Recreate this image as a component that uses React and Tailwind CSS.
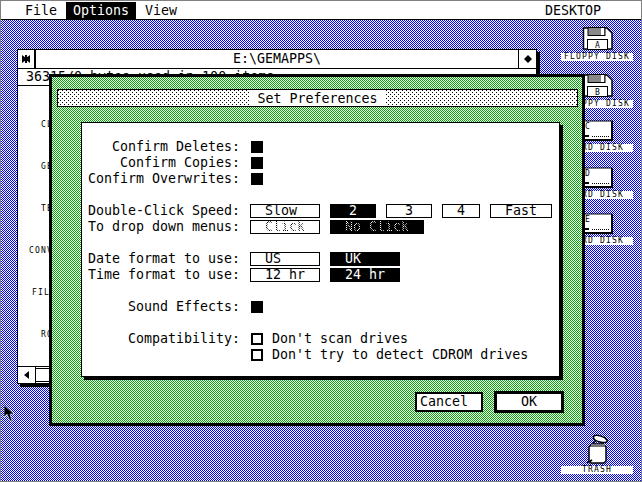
const blue = "bg-[repeating-conic-gradient(#0000ff_0_25%,#ffffff_0_50%)] bg-[length:2px_2px]";
const green = "bg-[repeating-conic-gradient(#00aa00_0_25%,#ffffff_0_50%)] bg-[length:2px_2px]";
const dots = "bg-white bg-[conic-gradient(at_1px_1px,transparent_75%,#000000_0),conic-gradient(at_1px_1px,transparent_75%,#000000_0)] bg-[length:4px_4px] bg-[position:0_0,2px_2px]";
const mono = "font-['DejaVu_Sans_Mono',monospace] text-[13.3px] leading-4";

function Floppy({ letter }) {
  return (
    <svg width="31" height="23" viewBox="0 0 31 23" className="block">
      <path d="M1.5 1H25L30 6V22H1.5Z" fill="#fff" stroke="#000" strokeWidth="1.5" />
      <rect x="6" y="0.5" width="17" height="8" fill="#888" stroke="#000" />
      <rect x="19" y="1" width="3" height="7" fill="#fff" />
      <rect x="5.5" y="12.5" width="20" height="10" fill="#fff" stroke="#000" />
      <text x="15.5" y="20.5" fontSize="8" textAnchor="middle" fontFamily="DejaVu Sans Mono" fill="#000">{letter}</text>
    </svg>
  );
}

function HardDisk({ letter }) {
  return (
    <svg width="31" height="21" viewBox="0 0 31 21" className="block">
      <rect x="1" y="1" width="29" height="19" fill="#fff" stroke="#000" />
      <rect x="29" y="1" width="2" height="20" fill="#000" />
      <rect x="1" y="19" width="30" height="2" fill="#000" />
      <text x="3" y="9" fontSize="8" fontFamily="DejaVu Sans Mono" fill="#000">{letter}</text>
      <rect x="3" y="15" width="4" height="2" fill="#000" />
      <path d="M10 16.5H28" stroke="#000" strokeDasharray="1 1" />
    </svg>
  );
}

function DeskIcon({ className, label, children }) {
  return (
    <div className={`absolute w-[72px] flex flex-col items-center ${className}`}>
      {children}
      <div className="w-full h-2 mt-[3px] bg-white text-center text-black font-['DejaVu_Sans_Mono',monospace] text-[8px] leading-2 tracking-[1.2px]">
        {label}
      </div>
    </div>
  );
}

function Option({ on, width, pad, disabled, children }) {
  let text = "";
  if (disabled) {
    text = on
      ? "bg-[repeating-conic-gradient(#ffffff_0_25%,#000000_0_50%)] bg-[length:2px_2px] bg-clip-text text-transparent"
      : "bg-[repeating-conic-gradient(#000000_0_25%,#ffffff_0_50%)] bg-[length:2px_2px] bg-clip-text text-transparent";
  }
  return (
    <div className={`h-[14px] border border-black flex items-center ${on ? "bg-black text-white" : "bg-white text-black"} ${width} ${pad}`}>
      <span className={`whitespace-pre leading-3 ${text}`}>{children}</span>
    </div>
  );
}

function Row({ label, children, className = "" }) {
  return (
    <div className={`h-4 flex items-center ${className}`}>
      <div className="w-[158px] text-right whitespace-pre">{label}</div>
      <div className="ml-[10px] flex items-center gap-[10px]">{children}</div>
    </div>
  );
}

function Box({ on }) {
  return <div className={`ml-px size-3 border-2 border-black ${on ? "bg-black" : "bg-white"}`} />;
}

function Check({ children }) {
  return (
    <div className="flex items-center gap-[9px]">
      <Box />
      <span className="whitespace-pre">{children}</span>
    </div>
  );
}

function DirWindow() {
  const items = [
    ["CLOCK", "ml-[23px]"],
    ["GEMAPPS", "ml-[23px]"],
    ["TEXT", "ml-[23px]"],
    ["CONVERT", "ml-[11px]"],
    ["FILES", "ml-[14px]"],
    ["ROOT", "ml-[23px]"],
  ];
  return (
    <div className="absolute left-4 top-[29px] w-[520px] h-[335px] border border-black bg-white shadow-[3px_3px_0_#000] flex flex-col text-black">
      <div className="h-[19px] flex border-b border-black">
        <div className="w-[18px] border-r-2 border-black flex items-center justify-center">
          <svg width="8" height="8" viewBox="0 0 8 8"><path d="M0 0L4 3L8 0V8L4 5L0 8Z" fill="#000" /><rect x="3" y="0" width="2" height="8" fill="#000" /></svg>
        </div>
        <div className={`flex-1 text-center ${mono} leading-[18px]`}>E:\GEMAPPS\</div>
        <div className="w-[18px] border-l border-black flex items-center justify-center">
          <svg width="8" height="8" viewBox="0 0 8 8"><path d="M4 0L8 4L4 8L0 4Z" fill="#000" /></svg>
        </div>
      </div>
      <div className={`h-[17px] pl-2 border-b border-black whitespace-pre ${mono}`}>36315/0 bytes used in 100 items</div>
      <div className="flex-1 flex flex-col pt-[35px] gap-[34px] overflow-hidden">
        {items.map(([name, ml]) => (
          <div key={name} className={`h-2 whitespace-pre font-['DejaVu_Sans_Mono',monospace] text-[8px] leading-2 tracking-[1.2px] ${ml}`}>{name}</div>
        ))}
      </div>
      <div className="h-[17px] flex border-t border-black">
        <div className="w-[18px] border-r border-black flex items-center justify-center">
          <svg width="5" height="8" viewBox="0 0 5 8"><path d="M5 0V8L0 4Z" fill="#000" /></svg>
        </div>
        <div className="flex-1 my-[1px] border-y border-black" />
      </div>
    </div>
  );
}

function PrefsDialog() {
  return (
    <div className={`absolute left-[48px] top-[54px] w-[536px] h-[352px] border-[3px] border-black flex flex-col text-black ${green} ${mono}`}>
      <div className={`mt-3 ml-[5px] w-[521px] h-[18px] border border-black flex justify-center ${dots}`}>
        <div className="bg-white px-2 leading-[17px]">Set Preferences</div>
      </div>
      <div className="mt-[15px] ml-[29px] w-[479px] h-[255px] border border-black bg-white shadow-[3px_3px_0_#000] pt-4 flex flex-col">
        <Row label="Confirm Deletes:"><Box on /></Row>
        <Row label="Confirm Copies:"><Box on /></Row>
        <Row label="Confirm Overwrites:"><Box on /></Row>
        <Row label="Double-Click Speed:" className="mt-4">
          <Option width="w-[70px]" pad="pl-[14px]">Slow</Option>
          <Option on width="w-[46px]" pad="pl-[18px]">2</Option>
          <Option width="w-[46px]" pad="pl-[18px]">3</Option>
          <Option width="w-[38px]" pad="pl-[14px]">4</Option>
          <Option width="w-[62px]" pad="pl-[14px]">Fast</Option>
        </Row>
        <Row label="To drop down menus:">
          <Option disabled width="w-[70px]" pad="pl-[14px]">Click</Option>
          <Option disabled on width="w-[94px]" pad="pl-[14px]">No Click</Option>
        </Row>
        <Row label="Date format to use:" className="mt-4">
          <Option width="w-[70px]" pad="pl-[14px]">US</Option>
          <Option on width="w-[70px]" pad="pl-[14px]">UK</Option>
        </Row>
        <Row label="Time format to use:">
          <Option width="w-[70px]" pad="pl-[14px]">12 hr</Option>
          <Option on width="w-[70px]" pad="pl-[14px]">24 hr</Option>
        </Row>
        <Row label="Sound Effects:" className="mt-4"><Box on /></Row>
        <Row label="Compatibility:" className="mt-4"><Check>Don't scan drives</Check></Row>
        <Row label=""><Check>Don't try to detect CDROM drives</Check></Row>
      </div>
      <div className="mt-[14px] ml-[363px] flex items-center gap-[11px]">
        <div className="w-[68px] h-5 border-2 border-black bg-white pl-[3px] leading-4">Cancel</div>
        <div className="w-[70px] h-[22px] border-[3px] border-black bg-white text-center leading-4">OK</div>
      </div>
    </div>
  );
}

export default function App() {
  return (
    <div className="w-[642px] h-[482px] box-border border border-[#808080] overflow-hidden flex flex-col bg-white">
      <div className={`h-[19px] border-b border-black flex items-stretch text-black ${mono}`}>
        <div className="ml-[24px] w-[41px] pt-[2px]">File</div>
        <div className="w-[70px] pl-[7px] pt-px bg-black text-white mt-px">Options</div>
        <div className="ml-[9px] pt-[2px]">View</div>
        <div className="ml-[368px] pt-[2px]">DESKTOP</div>
      </div>
      <div className={`relative flex-1 ${blue}`}>
        <DeskIcon className="left-[560px] top-[7px]" label="FLOPPY DISK"><Floppy letter="A" /></DeskIcon>
        <DeskIcon className="left-[560px] top-[54px]" label="FLOPPY DISK"><Floppy letter="B" /></DeskIcon>
        <DeskIcon className="left-[560px] top-[100px]" label="HARD DISK"><HardDisk letter="C" /></DeskIcon>
        <DeskIcon className="left-[560px] top-[147px]" label="HARD DISK"><HardDisk letter="D" /></DeskIcon>
        <DeskIcon className="left-[560px] top-[193px]" label="HARD DISK"><HardDisk letter="E" /></DeskIcon>
        <DirWindow />
        <PrefsDialog />
        <DeskIcon className="left-[560px] top-[414px]" label="TRASH">
          <svg width="24" height="32" viewBox="0 0 24 32" className="block -mb-[3px]">
            <path d="M9 2C12 0 20 3 22 6C23 9 19 9 15 8C11 7 7 5 9 2Z" fill="#fff" stroke="#000" strokeWidth="1.5" />
            <path d="M4 13V27L6 29H19L21 27V13L18 10H7Z" fill="#fff" stroke="#000" strokeWidth="1.5" />
            <rect x="6" y="10" width="14" height="3" fill="#777" />
            <path d="M8 9L11 7" stroke="#000" strokeWidth="1.5" />
            <path d="M2 29L7 26" stroke="#000" strokeWidth="2" />
          </svg>
        </DeskIcon>
        <svg width="10" height="17" viewBox="0 0 10 17" className="absolute left-[3px] top-[385px]">
          <path d="M0 0V12L3 9L6 16H8L6 9H10Z" fill="#000" stroke="#fff" strokeWidth="0.5" />
        </svg>
      </div>
    </div>
  );
}
